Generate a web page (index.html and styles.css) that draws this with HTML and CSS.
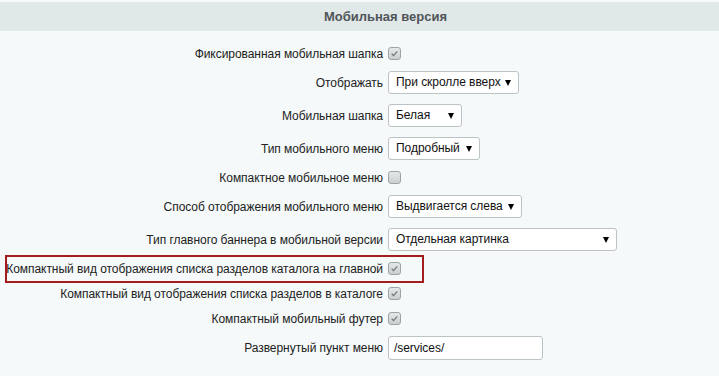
FILE: index.html
```html
<!DOCTYPE html>
<html lang="ru">
<head>
    <meta charset="UTF-8">
    <title>Мобильная версия</title>
    <link rel="stylesheet" href="styles.css">
</head>
<body>
    <div class="section-head">Мобильная версия</div>

    <div class="options">
        <div class="row row-check">
            <div class="label">Фиксированная мобильная шапка</div>
            <span class="check checked"><svg viewBox="0 0 13 13"><path d="M3.2 6.8 L5.4 9 L9.8 4"/></svg></span>
        </div>
        <div class="row row-field">
            <div class="label">Отображать</div>
            <span class="select" style="width: 131px">При скролле вверх</span>
        </div>
        <div class="row row-field">
            <div class="label">Мобильная шапка</div>
            <span class="select" style="width: 74px">Белая</span>
        </div>
        <div class="row row-field">
            <div class="label">Тип мобильного меню</div>
            <span class="select" style="width: 92px">Подробный</span>
        </div>
        <div class="row row-check">
            <div class="label">Компактное мобильное меню</div>
            <span class="check"></span>
        </div>
        <div class="row row-field">
            <div class="label">Способ отображения мобильного меню</div>
            <span class="select" style="width: 134px">Выдвигается слева</span>
        </div>
        <div class="row row-field">
            <div class="label">Тип главного баннера в мобильной версии</div>
            <span class="select" style="width: 229px">Отдельная картинка</span>
        </div>
        <div class="row row-check marked">
            <div class="label">Компактный вид отображения списка разделов каталога на главной</div>
            <span class="check checked"><svg viewBox="0 0 13 13"><path d="M3.2 6.8 L5.4 9 L9.8 4"/></svg></span>
        </div>
        <div class="row row-check">
            <div class="label">Компактный вид отображения списка разделов в каталоге</div>
            <span class="check checked"><svg viewBox="0 0 13 13"><path d="M3.2 6.8 L5.4 9 L9.8 4"/></svg></span>
        </div>
        <div class="row row-check">
            <div class="label">Компактный мобильный футер</div>
            <span class="check checked"><svg viewBox="0 0 13 13"><path d="M3.2 6.8 L5.4 9 L9.8 4"/></svg></span>
        </div>
        <div class="row row-field">
            <div class="label">Развернутый пункт меню</div>
            <span class="text-input">/services/</span>
        </div>
    </div>
</body>
</html>
```

FILE: styles.css
```css
body {
    margin: 0;
    padding: 0;
    background-color: #f5f9f9;
    font-family: 'Liberation Sans', Arial, sans-serif;
    font-size: 12px;
    letter-spacing: -0.05px;
    color: #222;
}

.section-head {
    margin-top: 2px;
    height: 29px;
    line-height: 29px;
    padding-left: 52px;
    background-color: #e0e8e8;
    color: #505558;
    font-size: 13px;
    font-weight: bold;
    letter-spacing: 0;
    text-align: center;
}

.options {
    padding-top: 10px;
}

.row {
    display: flex;
    align-items: center;
    position: relative;
}

.row-check {
    height: 25px;
}

.row-field {
    height: 33px;
}

.label {
    flex-shrink: 0;
    width: 383px;
    padding-right: 5px;
    text-align: right;
    white-space: nowrap;
}

.marked::after {
    content: '';
    position: absolute;
    left: 5px;
    top: -1px;
    width: 419px;
    height: 28px;
    border: 2px solid #a31d1d;
    box-sizing: border-box;
}

.check {
    flex-shrink: 0;
    display: inline-block;
    width: 13px;
    height: 13px;
    box-sizing: border-box;
    border: 1px solid #9ea4a6;
    border-radius: 3px;
    background: linear-gradient(#e4e8e8, #c9cfd0);
}

.check svg {
    display: block;
    width: 11px;
    height: 11px;
}

.check path {
    fill: none;
    stroke: #6f7679;
    stroke-width: 1.4;
}

.select {
    flex-shrink: 0;
    position: relative;
    display: inline-block;
    height: 23px;
    line-height: 21px;
    box-sizing: border-box;
    padding-left: 7px;
    background-color: #fff;
    border: 1px solid #bcc3c6;
    border-radius: 3px;
    white-space: nowrap;
    color: #111;
}

.select::after {
    content: '';
    position: absolute;
    right: 7px;
    top: 8px;
    border-left: 3px solid transparent;
    border-right: 3px solid transparent;
    border-top: 6px solid #000;
}

.text-input {
    flex-shrink: 0;
    display: inline-block;
    width: 155px;
    height: 24px;
    line-height: 22px;
    box-sizing: border-box;
    padding-left: 5px;
    background-color: #fff;
    border: 1px solid #bcc3c6;
    border-radius: 3px;
    color: #111;
}
```
